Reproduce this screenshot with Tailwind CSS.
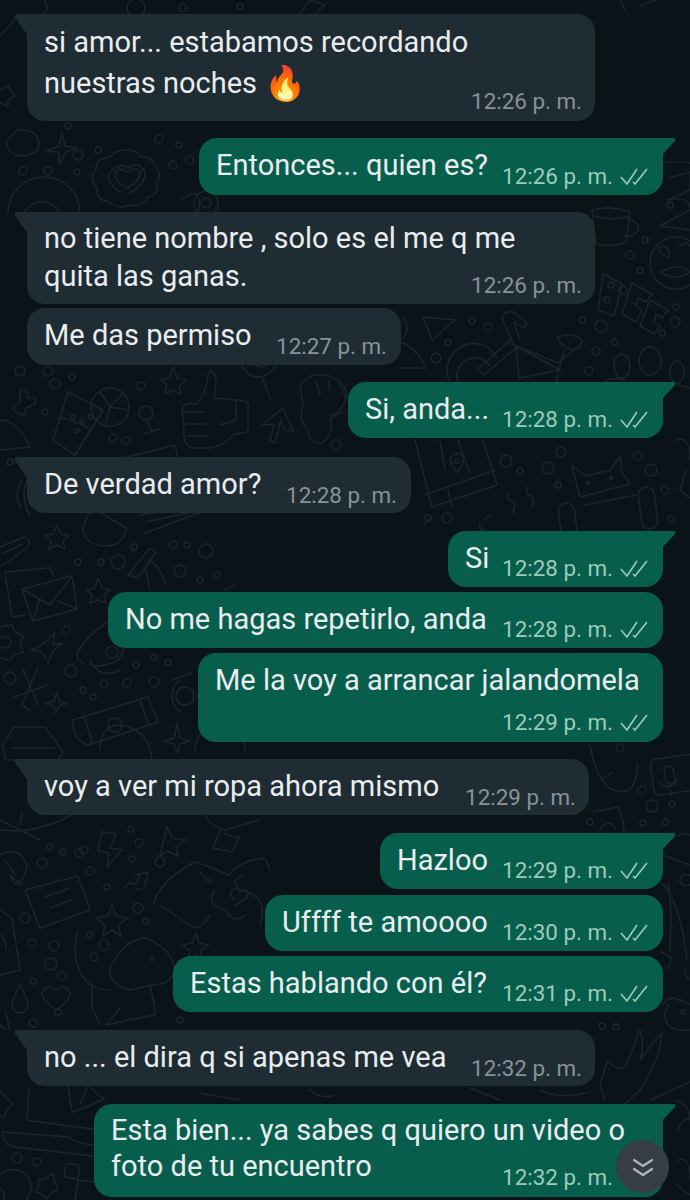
<!DOCTYPE html>
<html lang="es">
<head>
    <meta charset="UTF-8">
    <meta name="viewport" content="width=device-width, initial-scale=1.0">
    <title>Chat</title>
    <script src="https://cdn.jsdelivr.net/npm/@tailwindcss/browser@4"></script>
</head>
<body class="bg-[#0a1318] font-['Roboto',sans-serif]">
<div class="relative w-[690px] h-[1200px] overflow-hidden pt-[14px]">

    <!-- Wallpaper doodles -->
    <svg class="absolute inset-0" width="690" height="1200" viewBox="0 0 690 1200" fill="none" stroke="#1b252b" stroke-width="1.5" stroke-linejoin="round" stroke-linecap="round">
        <!-- top left -->
        <path d="M9 150Q3 140 12 136Q16 127 27 131Q38 132 39 143Q39 153 28 155Q16 158 9 150Z"/>
        <path d="M62 133L65 146L77 148L66 152L59 164L59 152L47 151L59 146Z"/>
        <path d="M126 150Q137 149 141 157Q152 156 155 166Q163 175 156 183Q160 195 148 197Q142 208 129 205Q118 210 109 202Q96 200 97 188Q88 178 96 170Q96 157 108 158Q116 150 126 150Z"/>
        <path d="M127 188Q113 180 115 173Q120 166 127 172Q134 166 140 172Q141 181 127 188Z"/>
        <path d="M120 192Q105 182 110 172Q120 162 128 168Q138 160 145 172Q146 184 130 193"/>
        <path d="M8 213A36 36 0 0 1 80 213"/><path d="M24 213A20 20 0 0 1 60 213"/>
        <path d="M0 90L8 86L15 96L8 100L8 107L0 102"/>
        <circle cx="78" cy="155" r="5"/><circle cx="98" cy="150" r="3"/><circle cx="23" cy="171" r="4"/><circle cx="48" cy="171" r="4"/><circle cx="77" cy="172" r="3"/><circle cx="173" cy="165" r="4"/><circle cx="190" cy="160" r="4"/>
        <circle cx="68" cy="126" r="3"/><circle cx="159" cy="139" r="4"/><circle cx="179" cy="145" r="3"/>
        <path d="M182 200Q193 190 198 196Q202 207 195 218"/><circle cx="206" cy="203" r="12"/><circle cx="206" cy="203" r="5"/>
        <path d="M20 14Q5 30 0 36"/><path d="M45 0Q50 12 42 14"/><circle cx="136" cy="8" r="9"/><circle cx="183" cy="8" r="4"/><path d="M300 14L310 0L325 5L315 14"/><circle cx="240" cy="6" r="3"/><path d="M620 0L627 14M640 6L655 0"/>
        <!-- top right -->
        <path d="M655 165Q670 160 690 163M668 178L690 172L690 190L668 200Q690 195 690 210L660 226L690 230" />
        <path d="M592 210Q610 205 630 212L626 242Q610 248 596 244Z"/><path d="M628 219Q640 222 638 230Q634 238 624 236"/><path d="M595 216Q610 222 630 216"/>
        <circle cx="676" cy="263" r="26"/><path d="M660 252Q656 246 664 246Q672 250 668 258ZM680 246Q686 240 690 246M660 272Q676 282 690 272Q680 262 660 272Z"/>
        <circle cx="630" cy="255" r="4"/><circle cx="640" cy="270" r="3"/><circle cx="645" cy="240" r="3"/><circle cx="670" cy="205" r="3"/><circle cx="623" cy="290" r="4"/><circle cx="676" cy="307" r="3"/>
        <path d="M603 274L622 284L614 316L598 310Z"/><circle cx="611" cy="285" r="3"/><circle cx="607" cy="300" r="3"/>
        <path d="M632 283L652 294L646 302L638 298L636 306L642 310L636 322L622 314Z"/>
        <path d="M650 300L668 310L662 318L656 314L654 322L660 326L654 334L640 326Z"/>
        <circle cx="675" cy="322" r="5"/><circle cx="662" cy="333" r="3"/>
        <!-- bicycle -->
        <path d="M450 382A26 26 0 0 1 497 358"/><path d="M458 382A18 18 0 0 1 490 366"/>
        <path d="M477 370L510 340L516 348L484 375Z"/>
        <path d="M512 340L502 318Q505 309 515 313L527 323L523 328L514 322L520 340"/>
        <path d="M516 348L519 378L560 370L516 346L558 363L574 350"/>
        <path d="M557 337Q575 332 582 340Q582 349 572 350Q560 346 557 337Z"/>
        <path d="M564 350L556 382"/>
        <path d="M423 317L455 320L432 340Z"/><path d="M403 317Q412 328 402 340"/><path d="M400 342Q420 350 425 368L400 368"/><circle cx="436" cy="358" r="5"/><circle cx="448" cy="342" r="3"/><circle cx="472" cy="321" r="3"/><circle cx="488" cy="327" r="4"/>
        <circle cx="601" cy="326" r="6"/><circle cx="582" cy="320" r="3"/><circle cx="615" cy="342" r="3"/><circle cx="596" cy="351" r="4"/><circle cx="589" cy="371" r="4"/>
        <ellipse cx="622" cy="366" rx="8" ry="12"/><ellipse cx="650" cy="361" rx="11" ry="14"/><ellipse cx="677" cy="372" rx="7" ry="11"/>
        <path d="M605 382Q612 376 625 380M672 382Q680 386 690 388"/>
        <!-- map, android -->
        <path d="M415 440L432 507L497 485L483 440"/><path d="M425 495L495 470M470 474L458 440M440 440L445 470M448 490L452 507"/>
        <path d="M457 472Q449 462 451 457Q457 450 463 457Q465 463 457 472Z"/><circle cx="457" cy="461" r="2"/>
        <path d="M508 493Q505 500 514 501Q516 508 512 513M527 488Q525 495 532 496Q534 502 532 507"/>
        <path d="M572 466L586 476L610 470L620 456L622 472L630 484L580 497Z"/><circle cx="588" cy="483" r="1.5"/><circle cx="611" cy="478" r="1.5"/>
        <rect x="560" y="503" width="16" height="40" rx="8" transform="rotate(-8 568 523)"/><rect x="640" y="487" width="16" height="42" rx="8" transform="rotate(-8 648 508)"/><path d="M585 505L636 495"/>
        <circle cx="506" cy="461" r="6"/><circle cx="520" cy="471" r="3"/><circle cx="548" cy="468" r="6"/><circle cx="558" cy="485" r="3"/><circle cx="561" cy="452" r="5"/><circle cx="638" cy="456" r="4"/><circle cx="651" cy="470" r="6"/><circle cx="665" cy="490" r="4"/><circle cx="671" cy="519" r="3"/>
        <path d="M677 440Q690 435 690 460M686 470L680 490L690 498"/>
        <path d="M484 520L490 515M480 523Q478 531 486 530"/><circle cx="428" cy="518" r="3"/><circle cx="447" cy="518" r="5"/>
        <!-- glass, thumb row -->
        <path d="M68 392L103 410L75 455L53 440Z"/><path d="M60 418Q78 420 90 430"/><circle cx="110" cy="407" r="19"/><path d="M110 407L122 395M110 407L128 410M110 407L105 425M110 407L100 392"/>
        <circle cx="73" cy="417" r="2"/><circle cx="82" cy="421" r="2"/><circle cx="90" cy="417" r="2"/><circle cx="77" cy="431" r="2"/>
        <path d="M12 408L20 402L20 390L27 390L28 398L36 398L35 404L26 408L25 415L19 414Z"/>
        <path d="M173 367L177 378L187 380L179 386L181 394L173 390L165 394L167 385L160 380L170 378Z"/>
        <path d="M210 370Q216 372 216 382L214 398L236 400L248 402L248 432L234 434Q220 450 200 448L192 448Q182 445 184 425L182 410Q184 402 196 404Q206 395 208 375Z"/><path d="M183 412L205 412M184 424L205 424M187 436L208 436M220 425L236 420L236 400"/>
        <circle cx="146" cy="413" r="7"/><path d="M146 420L152 431M144 434L160 429"/>
        <path d="M240 360Q245 377 258 377Q270 377 279 360"/><path d="M262 377L270 398"/><path d="M250 360Q255 367 262 367Q268 367 272 360"/>
        <path d="M262 425L283 408L293 431L285 430L281 420L275 443L270 440L274 424Z"/>
        <path d="M300 385Q310 372 325 375Q345 380 347 395Q340 415 330 418Q335 435 322 443Q310 445 308 430Q298 420 303 405Z"/><path d="M316 380L320 395M328 380L330 392M340 385L347 400M330 415L345 412"/>
        <path d="M0 420Q18 420 30 447L0 450"/>
        <circle cx="20" cy="371" r="5"/><circle cx="48" cy="371" r="5"/><circle cx="55" cy="384" r="5"/><circle cx="72" cy="377" r="3"/><circle cx="141" cy="386" r="4"/><circle cx="45" cy="412" r="3"/><circle cx="113" cy="438" r="4"/><circle cx="126" cy="441" r="4"/><circle cx="336" cy="445" r="5"/>
        <path d="M115 460L175 445L178 457"/><circle cx="10" cy="462" r="3"/><path d="M22 480Q12 495 22 510"/><path d="M30 475Q18 495 30 515"/>
        <!-- middle left -->
        <path d="M0 547L24 537Q32 540 28 547L2 566M4 553L22 544"/>
        <path d="M57 525L61 534L69 535L63 541L65 549L57 545L49 549L51 541L45 535L53 534Z"/>
        <path d="M85 522Q90 505 105 515L126 528Q125 545 105 546Q85 545 83 530Z"/>
        <path d="M140 515L230 497L232 485M146 522L215 507L145 533"/>
        <path d="M5 572L50 568L54 577M12 617L5 572M12 617L25 615"/>
        <path d="M22 589L72 576L77 609L33 621Z"/><path d="M22 589L50 605L72 576M33 621L40 598M77 609L58 601"/>
        <path d="M98 578L102 588L110 590L104 596L106 603L98 600L90 603L92 595L87 590L95 588Z"/>
        <circle cx="173" cy="545" r="4"/><circle cx="187" cy="545" r="3"/><circle cx="206" cy="551" r="7"/><circle cx="180" cy="571" r="6"/><circle cx="200" cy="580" r="3"/><circle cx="217" cy="575" r="3"/><circle cx="118" cy="562" r="7"/><circle cx="134" cy="547" r="3"/><circle cx="78" cy="562" r="3"/><circle cx="101" cy="562" r="3"/><circle cx="66" cy="630" r="4"/>
        <path d="M128 575L150 548L156 552L138 578ZM148 560Q160 565 166 585"/><path d="M146 570L150 590"/><path d="M225 590L235 585"/>
        <path d="M55 632L53 645L63 643L53 651L48 663L42 652L31 650L42 645Z"/>
        <path d="M0 627L12 625L15 632L23 636L20 645L23 652L14 655L10 660L0 658"/><circle cx="5" cy="642" r="6"/>
        <path d="M77 653Q90 630 123 613Q128 650 118 660Q95 672 78 660ZM90 660Q100 680 120 670"/><circle cx="112" cy="652" r="6"/>
        <circle cx="154" cy="657" r="3"/><circle cx="168" cy="662" r="3"/><circle cx="136" cy="665" r="3"/><circle cx="71" cy="671" r="6"/>
        <circle cx="10" cy="678" r="6"/><path d="M12 698L48 685M22 667L38 705M38 667L22 705L30 710"/>
        <circle cx="83" cy="690" r="3"/><circle cx="104" cy="684" r="4"/><circle cx="127" cy="683" r="4"/><circle cx="154" cy="682" r="5"/><circle cx="93" cy="697" r="3"/>
        <path d="M57 692L59 702L67 703L59 706L56 713L54 706L45 703L54 701Z"/>
        <path d="M172 680L192 673M180 712A20 20 0 0 1 180 680"/><circle cx="185" cy="696" r="9"/>
        <path d="M73 720L148 697L158 722L88 745Q72 740 73 720Z"/><path d="M84 715L92 742M140 700L148 723"/><path d="M100 750Q100 725 120 725Q150 730 152 760"/><circle cx="115" cy="725" r="7"/>
        <path d="M3 745L14 727L45 727L63 752L58 760L5 760Z"/><path d="M12 748L55 748"/>
        <path d="M177 723L180 738L190 741L180 744L177 753L174 744L163 741L174 738Z"/>
        <path d="M195 750A22 22 0 0 1 245 750"/>
        <!-- right column -->
        <path d="M423 525L432 517"/><circle cx="620" cy="748" r="4"/>
        <path d="M590 745Q600 800 630 790Q640 775 637 762M604 778L612 772"/>
        <rect x="652" y="757" width="44" height="36" rx="5" transform="rotate(-8 672 775)"/><path d="M664 770A5 5 0 0 1 673 768L675 780A5 5 0 0 1 666 782ZM660 783Q668 792 678 780M670 790L672 796"/>
        <circle cx="642" cy="790" r="4"/><circle cx="652" cy="806" r="6"/><circle cx="672" cy="804" r="3"/><circle cx="643" cy="823" r="3"/><circle cx="665" cy="822" r="3"/><circle cx="590" cy="822" r="3"/>
        <path d="M592 812L618 807Q624 820 624 833M600 830A8 8 0 0 1 615 828"/>
        <path d="M664 845Q680 830 690 835M663 855L690 865"/><path d="M662 883Q680 900 687 960"/><path d="M668 883Q672 900 670 952"/><circle cx="686" cy="880" r="6"/>
        <path d="M661 952L672 958L668 968L661 968"/><path d="M685 968Q684 975 690 980"/>
        <path d="M663 1005Q668 995 680 1000L690 1004M668 1005Q662 1015 668 1025Q675 1032 690 1030"/><circle cx="683" cy="1012" r="2"/>
        <circle cx="602" cy="1026" r="3"/><circle cx="616" cy="1027" r="3"/>
        <path d="M607 1062Q618 1070 625 1068Q632 1050 640 1030Q645 1045 640 1060Q655 1040 662 1033Q660 1060 640 1090L625 1104M607 1062L600 1085L605 1100"/>
        <path d="M650 1100L690 1082"/><path d="M676 1100Q690 1105 690 1120M678 1130A14 14 0 0 1 690 1118M678 1160Q690 1155 690 1180M676 1185L690 1195"/>
        <!-- lower left -->
        <path d="M102 832L116 834L110 848L122 850L107 867L109 853L98 851Z"/>
        <path d="M167 826L172 838L185 840L176 847L178 856L168 851L160 856L162 847Z"/>
        <path d="M125 887Q130 880 136 885L140 874L148 872L144 888Q138 892 135 888M136 875L148 872"/>
        <path d="M25 890L78 876L90 910L40 928Z"/><path d="M45 897L70 888M50 908L72 900"/>
        <path d="M112 905L116 916L128 918L118 925L121 936L112 930L103 936L105 925L96 918L108 916Z"/>
        <path d="M0 855Q20 845 27 865Q25 880 15 885L10 875L22 885M5 860L15 875"/>
        <circle cx="84" cy="850" r="4"/><circle cx="50" cy="847" r="3"/><circle cx="63" cy="852" r="3"/><circle cx="79" cy="853" r="4"/><circle cx="42" cy="863" r="5"/><circle cx="131" cy="829" r="3"/><circle cx="139" cy="843" r="4"/><circle cx="132" cy="859" r="3"/><circle cx="107" cy="887" r="3"/><circle cx="90" cy="871" r="4"/><circle cx="138" cy="908" r="5"/><circle cx="146" cy="921" r="3"/><circle cx="160" cy="862" r="5"/><circle cx="25" cy="918" r="5"/>
        <path d="M0 820L40 840M0 830Q40 835 80 810M22 812L20 825"/>
        <path d="M205 810Q205 825 225 830L260 820M220 830L213 848L232 852L240 835M225 834L238 838"/>
        <path d="M153 905Q160 880 195 862Q215 868 228 875Q240 860 265 858L270 870M200 872Q215 890 210 878M215 890Q205 905 225 910Q235 925 245 915M190 925L160 905M190 925Q200 933 210 915M245 875Q228 880 240 890Q270 895 260 925"/>
        <path d="M235 900Q228 894 232 890Q236 886 240 892Q246 888 248 892Q250 898 235 905"/>
        <path d="M78 930Q70 960 85 980Q95 990 110 990"/><path d="M115 960Q125 940 145 938Q165 945 172 960Q178 975 165 983Q150 985 130 990Q110 985 110 970Q110 965 115 960Z"/><path d="M92 985L92 1008L100 1024M150 985Q155 1005 155 1015L128 1020L106 1025L120 1008"/><circle cx="152" cy="958" r="2"/>
        <path d="M196 933L199 943L208 945L200 951L203 960L196 954L188 960L190 951L183 945L192 943Z"/>
        <circle cx="90" cy="935" r="3"/><circle cx="104" cy="945" r="5"/><circle cx="94" cy="957" r="4"/><circle cx="32" cy="943" r="4"/><circle cx="54" cy="946" r="5"/><circle cx="51" cy="964" r="6"/><circle cx="62" cy="976" r="4"/><circle cx="33" cy="981" r="3"/><circle cx="58" cy="1012" r="3"/><circle cx="33" cy="1023" r="4"/><circle cx="180" cy="1020" r="3"/>
        <path d="M20 985Q28 1000 28 1005A8 8 0 0 1 12 1005Q12 1000 20 985Z"/><path d="M56 1010Q40 998 42 992Q48 983 56 990Q64 983 70 992Q70 1002 56 1010Z"/><path d="M5 1010L10 1030M0 1025L6 1030"/>
        <path d="M0 910L12 918L20 970L0 975"/><path d="M0 935Q8 940 6 950"/>
        <!-- bottom left: laptop, star, rings -->
        <path d="M29 1088L27 1118Q28 1121 32 1121L93 1129"/>
        <path d="M2 1132L70 1137Q72 1142 93 1145M2 1132Q4 1146 15 1147L93 1156"/>
        <path d="M0 1090L6 1098L14 1104L7 1109L4 1118L0 1114"/>
        <circle cx="17" cy="1158" r="5"/><circle cx="37" cy="1162" r="4"/>
        <path d="M53 1173L55 1183L58 1190L52 1192L47 1199L42 1194L36 1192L39 1185L38 1179L45 1179Z"/>
        <rect x="65" y="1164" width="14" height="14" rx="1" transform="rotate(8 72 1171)"/><path d="M78 1180L94 1182M78 1180L75 1200"/>
        <path d="M0 1175A18 18 0 0 1 26 1200"/><path d="M0 1188Q6 1192 4 1200"/>
        <path d="M68 1085L72 1112L92 1105L105 1098Q96 1096 90 1085M88 1086L80 1104"/>
        <!-- bottom gaps -->
        <path d="M470 1088L500 1100M540 1090Q560 1100 590 1092M200 1093L240 1100M310 1090Q320 1100 335 1095"/>
    </svg>

    <!-- Messages -->
    <div class="relative flex flex-col text-[29px] leading-[41px] text-[#e9edef]">

        <!-- si amor -->
        <div class="relative self-start ml-[27px] w-[568px] h-[107px] bg-[#202c33] rounded-[18px] rounded-tl-none pl-[17px] pr-[13px] pt-[8px] flex flex-col">
            <svg class="absolute left-[-13px] top-0" width="14" height="24" viewBox="0 0 14 24"><path d="M14 0H4C0 0 0 3 2 5L14 22Z" fill="#202c33"/></svg>
            <p class="h-[82px]">si amor... estabamos recordando<br>nuestras noches <span class="text-[34px] leading-none align-[-2px]">🔥</span></p>
            <span class="self-end text-[22.4px] leading-[26px] mt-[-16px] text-[#87939a]">12:26 p. m.</span>
        </div>

        <!-- Entonces -->
        <div class="relative self-end mt-[17px] mr-[27px] w-[464px] h-[57px] bg-[#085e4c] rounded-[18px] rounded-tr-none pl-[17px] pr-[15px] flex justify-between">
            <svg class="absolute right-[-13px] top-0" width="14" height="18" viewBox="0 0 14 18"><path d="M0 0H11C14 0 14 2 12 4L0 17Z" fill="#085e4c"/></svg>
            <p class="pt-[7px]">Entonces... quien es?</p>
            <div class="flex items-center gap-[7px] pt-[18px] text-[22.4px] leading-[26px] text-[#9ccbba]">12:26 p. m.
                <svg width="28" height="18" viewBox="0 0 28 18" fill="none" stroke="#9ccbba" stroke-width="1.6"><path d="M1 10L7 17L17 2M13 15L15 17L27 2"/></svg>
            </div>
        </div>

        <!-- no tiene nombre -->
        <div class="relative self-start mt-[17px] ml-[27px] w-[568px] h-[92px] bg-[#202c33] rounded-[18px] rounded-tl-none pl-[17px] pr-[13px] pt-[7px] flex flex-col">
            <svg class="absolute left-[-13px] top-0" width="14" height="24" viewBox="0 0 14 24"><path d="M14 0H4C0 0 0 3 2 5L14 22Z" fill="#202c33"/></svg>
            <p class="leading-[38px]">no tiene nombre , solo es el me q me<br>quita las ganas.</p>
            <span class="self-end text-[22.4px] leading-[26px] mt-[-23px] text-[#87939a]">12:26 p. m.</span>
        </div>

        <!-- Me das permiso -->
        <div class="self-start mt-[4px] ml-[27px] w-[374px] h-[57px] bg-[#202c33] rounded-[18px] pl-[17px] pr-[14px] flex justify-between">
            <p class="pt-[7px]">Me das permiso</p>
            <span class="pt-[25px] text-[22.4px] leading-[26px] text-[#87939a]">12:27 p. m.</span>
        </div>

        <!-- Si, anda -->
        <div class="relative self-end mt-[17px] mr-[27px] w-[315px] h-[56px] bg-[#085e4c] rounded-[18px] rounded-tr-none pl-[17px] pr-[15px] flex justify-between">
            <svg class="absolute right-[-13px] top-0" width="14" height="18" viewBox="0 0 14 18"><path d="M0 0H11C14 0 14 2 12 4L0 17Z" fill="#085e4c"/></svg>
            <p class="pt-[7px]">Si, anda...</p>
            <div class="flex items-center gap-[7px] pt-[18px] text-[22.4px] leading-[26px] text-[#9ccbba]">12:28 p. m.
                <svg width="28" height="18" viewBox="0 0 28 18" fill="none" stroke="#9ccbba" stroke-width="1.6"><path d="M1 10L7 17L17 2M13 15L15 17L27 2"/></svg>
            </div>
        </div>

        <!-- De verdad amor -->
        <div class="relative self-start mt-[19px] ml-[27px] w-[384px] h-[56px] bg-[#202c33] rounded-[18px] rounded-tl-none pl-[17px] pr-[14px] flex justify-between">
            <svg class="absolute left-[-13px] top-0" width="14" height="24" viewBox="0 0 14 24"><path d="M14 0H4C0 0 0 3 2 5L14 22Z" fill="#202c33"/></svg>
            <p class="pt-[7px]">De verdad amor?</p>
            <span class="pt-[25px] text-[22.4px] leading-[26px] text-[#87939a]">12:28 p. m.</span>
        </div>

        <!-- Si -->
        <div class="relative self-end mt-[18px] mr-[27px] w-[215px] h-[56px] bg-[#085e4c] rounded-[18px] rounded-tr-none pl-[17px] pr-[15px] flex justify-between">
            <svg class="absolute right-[-13px] top-0" width="14" height="18" viewBox="0 0 14 18"><path d="M0 0H11C14 0 14 2 12 4L0 17Z" fill="#085e4c"/></svg>
            <p class="pt-[7px]">Si</p>
            <div class="flex items-center gap-[7px] pt-[18px] text-[22.4px] leading-[26px] text-[#9ccbba]">12:28 p. m.
                <svg width="28" height="18" viewBox="0 0 28 18" fill="none" stroke="#9ccbba" stroke-width="1.6"><path d="M1 10L7 17L17 2M13 15L15 17L27 2"/></svg>
            </div>
        </div>

        <!-- No me hagas -->
        <div class="self-end mt-[5px] mr-[27px] w-[555px] h-[56px] bg-[#085e4c] rounded-[18px] pl-[17px] pr-[15px] flex justify-between">
            <p class="pt-[7px]">No me hagas repetirlo, anda</p>
            <div class="flex items-center gap-[7px] pt-[18px] text-[22.4px] leading-[26px] text-[#9ccbba]">12:28 p. m.
                <svg width="28" height="18" viewBox="0 0 28 18" fill="none" stroke="#9ccbba" stroke-width="1.6"><path d="M1 10L7 17L17 2M13 15L15 17L27 2"/></svg>
            </div>
        </div>

        <!-- Me la voy -->
        <div class="self-end mt-[5px] mr-[27px] w-[465px] h-[89px] bg-[#085e4c] rounded-[18px] pl-[17px] pr-[15px] pt-[7px] flex flex-col">
            <p>Me la voy a arrancar jalandomela</p>
            <div class="self-end flex items-center gap-[7px] mt-[8px] text-[22.4px] leading-[26px] text-[#9ccbba]">12:29 p. m.
                <svg width="28" height="18" viewBox="0 0 28 18" fill="none" stroke="#9ccbba" stroke-width="1.6"><path d="M1 10L7 17L17 2M13 15L15 17L27 2"/></svg>
            </div>
        </div>

        <!-- voy a ver -->
        <div class="relative self-start mt-[17px] ml-[27px] w-[562px] h-[56px] bg-[#202c33] rounded-[18px] rounded-tl-none pl-[17px] pr-[13px] flex justify-between">
            <svg class="absolute left-[-13px] top-0" width="14" height="24" viewBox="0 0 14 24"><path d="M14 0H4C0 0 0 3 2 5L14 22Z" fill="#202c33"/></svg>
            <p class="pt-[7px]">voy a ver mi ropa ahora mismo</p>
            <span class="pt-[25px] text-[22.4px] leading-[26px] text-[#87939a]">12:29 p. m.</span>
        </div>

        <!-- Hazloo -->
        <div class="relative self-end mt-[18px] mr-[27px] w-[283px] h-[56px] bg-[#085e4c] rounded-[18px] rounded-tr-none pl-[17px] pr-[15px] flex justify-between">
            <svg class="absolute right-[-13px] top-0" width="14" height="18" viewBox="0 0 14 18"><path d="M0 0H11C14 0 14 2 12 4L0 17Z" fill="#085e4c"/></svg>
            <p class="pt-[7px]">Hazloo</p>
            <div class="flex items-center gap-[7px] pt-[18px] text-[22.4px] leading-[26px] text-[#9ccbba]">12:29 p. m.
                <svg width="28" height="18" viewBox="0 0 28 18" fill="none" stroke="#9ccbba" stroke-width="1.6"><path d="M1 10L7 17L17 2M13 15L15 17L27 2"/></svg>
            </div>
        </div>

        <!-- Uffff -->
        <div class="self-end mt-[6px] mr-[27px] w-[398px] h-[56px] bg-[#085e4c] rounded-[18px] pl-[17px] pr-[15px] flex justify-between">
            <p class="pt-[7px]">Uffff te amoooo</p>
            <div class="flex items-center gap-[7px] pt-[18px] text-[22.4px] leading-[26px] text-[#9ccbba]">12:30 p. m.
                <svg width="28" height="18" viewBox="0 0 28 18" fill="none" stroke="#9ccbba" stroke-width="1.6"><path d="M1 10L7 17L17 2M13 15L15 17L27 2"/></svg>
            </div>
        </div>

        <!-- Estas hablando -->
        <div class="self-end mt-[5px] mr-[27px] w-[490px] h-[56px] bg-[#085e4c] rounded-[18px] pl-[17px] pr-[15px] flex justify-between">
            <p class="pt-[7px]">Estas hablando con él?</p>
            <div class="flex items-center gap-[7px] pt-[18px] text-[22.4px] leading-[26px] text-[#9ccbba]">12:31 p. m.
                <svg width="28" height="18" viewBox="0 0 28 18" fill="none" stroke="#9ccbba" stroke-width="1.6"><path d="M1 10L7 17L17 2M13 15L15 17L27 2"/></svg>
            </div>
        </div>

        <!-- no ... el dira -->
        <div class="relative self-start mt-[18px] ml-[27px] w-[568px] h-[56px] bg-[#202c33] rounded-[18px] rounded-tl-none pl-[17px] pr-[13px] flex justify-between">
            <svg class="absolute left-[-13px] top-0" width="14" height="24" viewBox="0 0 14 24"><path d="M14 0H4C0 0 0 3 2 5L14 22Z" fill="#202c33"/></svg>
            <p class="pt-[7px]">no ... el dira q si apenas me vea</p>
            <span class="pt-[25px] text-[22.4px] leading-[26px] text-[#87939a]">12:32 p. m.</span>
        </div>

        <!-- Esta bien -->
        <div class="relative self-end mt-[18px] mr-[27px] w-[569px] h-[93px] bg-[#085e4c] rounded-[18px] rounded-tr-none pl-[17px] pr-[15px] pt-[8px] flex flex-col">
            <svg class="absolute right-[-13px] top-0" width="14" height="18" viewBox="0 0 14 18"><path d="M0 0H11C14 0 14 2 12 4L0 17Z" fill="#085e4c"/></svg>
            <p class="leading-[36px]">Esta bien... ya sabes q quiero un video o<br>foto de tu encuentro</p>
            <div class="self-end flex items-center gap-[7px] mt-[-20px] text-[22.4px] leading-[26px] text-[#9ccbba]">12:32 p. m.
                <svg width="28" height="18" viewBox="0 0 28 18" fill="none" stroke="#9ccbba" stroke-width="1.6"><path d="M1 10L7 17L17 2M13 15L15 17L27 2"/></svg>
            </div>
        </div>
    </div>

    <!-- Scroll to bottom button -->
    <div class="absolute left-[616px] top-[1140px] w-[53px] h-[53px] rounded-full bg-[#363d43] flex items-center justify-center pt-[3px]">
        <svg width="22" height="20" viewBox="0 0 22 20" fill="none" stroke="#aeb6bb" stroke-width="2.2" stroke-linecap="round" stroke-linejoin="round"><path d="M2 2L11 8L20 2M2 11L11 17L20 11"/></svg>
    </div>
</div>
</body>
</html>
